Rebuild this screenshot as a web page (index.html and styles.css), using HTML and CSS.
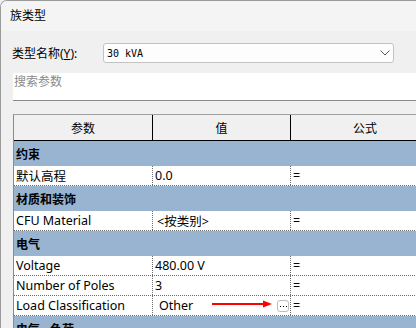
FILE: index.html
```html
<!DOCTYPE html>
<html lang="zh-CN">
<head>
    <meta charset="UTF-8">
    <meta name="viewport" content="width=device-width, initial-scale=1.0">
    <title>族类型</title>
    <link rel="stylesheet" href="styles.css">
</head>
<body>
    <div class="dialog">
        <div class="titlebar">族类型</div>
        <div class="content">
            <div class="type-row">
                <label class="type-label">类型名称(<u>Y</u>):</label>
                <div class="combo">
                    <span class="combo-text">30 kVA</span>
                    <svg class="chevron" width="10" height="6" viewBox="0 0 10 6">
                        <polyline points="0.5,0.5 5,5 9.5,0.5" fill="none" stroke="#5a5a5a" stroke-width="1"/>
                    </svg>
                </div>
            </div>
            <div class="search">搜索参数</div>

            <div class="grid">
                <div class="row head">
                    <div class="cell c1">参数</div>
                    <div class="cell c2">值</div>
                    <div class="cell c3">公式</div>
                </div>

                <div class="row group"><div class="cell">约束</div></div>
                <div class="row data">
                    <div class="cell c1">默认高程</div>
                    <div class="cell c2">0.0</div>
                    <div class="cell c3">=</div>
                </div>

                <div class="row group"><div class="cell">材质和装饰</div></div>
                <div class="row data">
                    <div class="cell c1">CFU Material</div>
                    <div class="cell c2 indent">&lt;按类别&gt;</div>
                    <div class="cell c3">=</div>
                </div>

                <div class="row group"><div class="cell">电气</div></div>
                <div class="row data">
                    <div class="cell c1">Voltage</div>
                    <div class="cell c2">480.00 V</div>
                    <div class="cell c3">=</div>
                </div>
                <div class="row data">
                    <div class="cell c1">Number of Poles</div>
                    <div class="cell c2">3</div>
                    <div class="cell c3">=</div>
                </div>
                <div class="row data">
                    <div class="cell c1">Load Classification</div>
                    <div class="cell c2 picker">
                        <span>Other</span>
                        <span class="more-btn">
                            <svg width="7" height="2" viewBox="0 0 7 2">
                                <rect x="0" y="0" width="1" height="1" fill="#000"/>
                                <rect x="3" y="0" width="1" height="1" fill="#000"/>
                                <rect x="6" y="0" width="1" height="1" fill="#000"/>
                            </svg>
                        </span>
                        <!-- annotation arrow pointing at the button -->
                        <svg class="arrow" width="60" height="8" viewBox="0 0 60 8">
                            <line x1="0" y1="4" x2="52" y2="4" stroke="#ff0000" stroke-width="2"/>
                            <polygon points="51,0.5 60,4 51,7.5" fill="#ff0000"/>
                        </svg>
                    </div>
                    <div class="cell c3">=</div>
                </div>

                <div class="row group"><div class="cell">电气 - 负荷</div></div>
            </div>
        </div>
    </div>
</body>
</html>
```

FILE: styles.css
```css
html, body {
    margin: 0;
}
body {
    width: 416px;
    height: 328px;
    overflow: hidden;
    background-color: #f0f0f0;
    font-family: "Noto Sans", "Noto Sans CJK SC", sans-serif;
    font-size: 12px;
    color: #000;
}
.dialog {
    height: 328px;
    box-sizing: border-box;
    border-top: 1px solid #9a9a9a;
    border-left: 1px solid #9a9a9a;
    border-top-left-radius: 7px;
    overflow: hidden;
}
.titlebar {
    height: 30px;
    line-height: 29px;
    padding-left: 9px;
    background-color: #f4f4f4;
}
.content {
    padding: 12px 0 0 11px;
}
.type-row {
    display: flex;
    align-items: center;
    height: 20px;
}
.type-label {
    width: 91px;
    flex-shrink: 0;
}
.combo {
    width: 291px;
    height: 20px;
    box-sizing: border-box;
    border: 1px solid #c3c3c3;
    border-radius: 3px;
    background-color: #fdfdfd;
    display: flex;
    align-items: center;
    justify-content: space-between;
    padding: 0 3px 0 3px;
    flex-shrink: 0;
}
.combo-text {
    font-family: "DejaVu Sans Mono", monospace;
    font-size: 10px;
}
.chevron {
    display: block;
}
.search {
    margin: 10px 0 0 1px;
    width: 430px;
    height: 28px;
    box-sizing: border-box;
    padding: 1px 0 0 1px;
    line-height: 16px;
    background-color: #fff;
    border-bottom: 1px solid #8a8a8a;
    color: #8a8a8a;
}
.grid {
    margin: 13px 0 0 1px;
    width: 427px;
    border-top: 1px solid #a0a0a0;
    border-left: 1px solid #8a8a8a;
    font-size: 12.5px;
}
.row {
    display: flex;
    box-sizing: border-box;
}
.cell {
    box-sizing: border-box;
    display: flex;
    align-items: center;
    white-space: nowrap;
}
.c1 {
    width: 139px;
}
.c2 {
    width: 138px;
}
.c3 {
    width: 148px;
}
.head {
    height: 26px;
    background-color: #f0f0f0;
    border-bottom: 1px solid #000;
    font-size: 12px;
}
.head .cell {
    justify-content: center;
}
.head .c1,
.head .c2 {
    border-right: 1px solid #000;
}
.group {
    height: 25px;
    background-color: #99b4d1;
    font-weight: bold;
    font-size: 12px;
}
.group .cell {
    padding-left: 2px;
}
.data {
    height: 20px;
    background-color: #fff;
    border-bottom: 1px dotted #6b6b6b;
}
.data .cell {
    padding-left: 2px;
}
.data .c1,
.data .c2 {
    border-right: 1px dotted #6b6b6b;
}
.data .indent {
    padding-left: 4px;
}
.picker {
    position: relative;
    justify-content: space-between;
    padding-right: 1px;
}
.data .picker {
    padding-left: 6px;
}
.more-btn {
    width: 12px;
    height: 12px;
    box-sizing: border-box;
    border: 1px solid #bdbdbd;
    border-radius: 3px;
    display: flex;
    align-items: flex-end;
    justify-content: center;
    padding-bottom: 3px;
}
.more-btn svg {
    display: block;
}
.arrow {
    position: absolute;
    left: 59px;
    top: 4px;
}
```
